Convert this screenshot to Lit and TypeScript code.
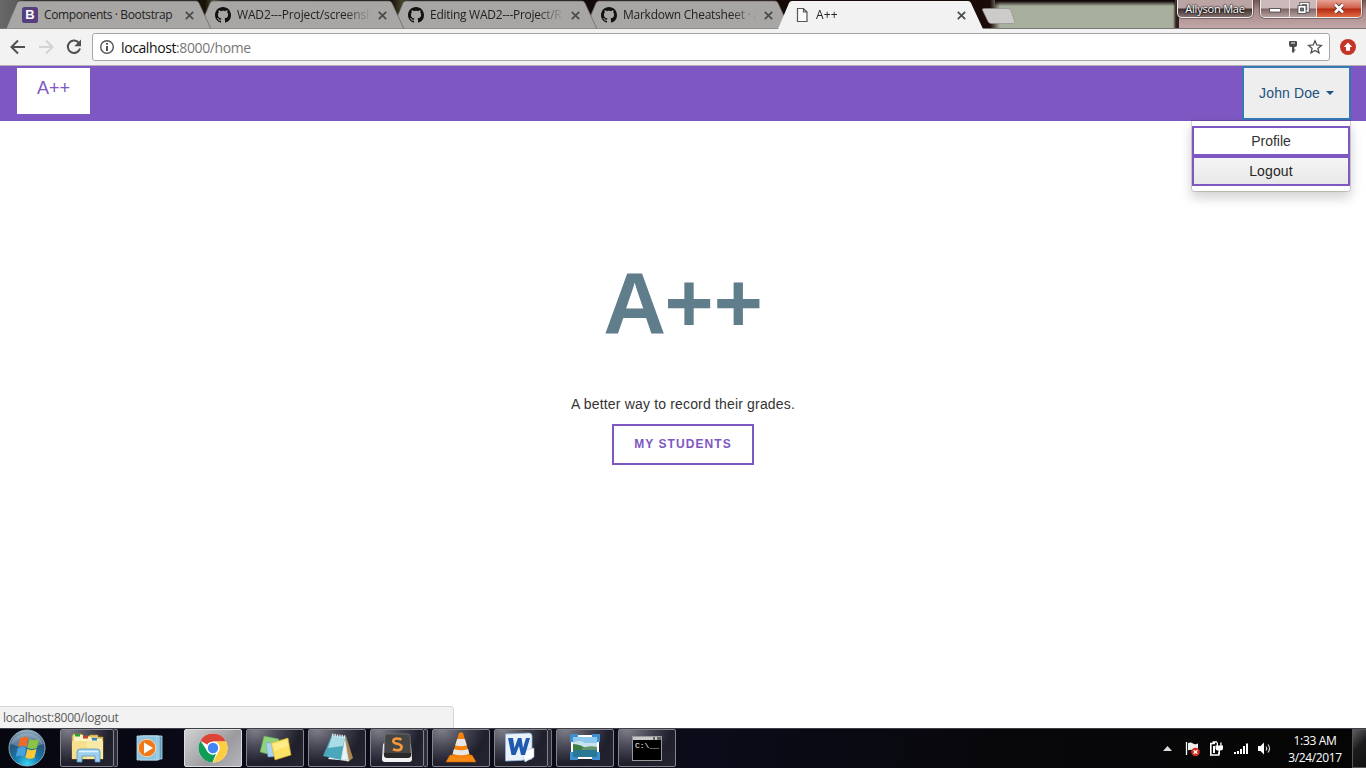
import { LitElement, html, css, svg } from "lit";
import { customElement } from "lit/decorators.js";

const octocat = html`<svg class="fav" width="16" height="16" viewBox="0 0 16 16"><path fill="#111" d="M8 0C3.58 0 0 3.58 0 8c0 3.54 2.29 6.53 5.47 7.59.4.07.55-.17.55-.38 0-.19-.01-.82-.01-1.49-2.01.37-2.53-.49-2.69-.94-.09-.23-.48-.94-.82-1.13-.28-.15-.68-.52-.01-.53.63-.01 1.08.58 1.23.82.72 1.21 1.87.87 2.33.66.07-.52.28-.87.51-1.07-1.78-.2-3.64-.89-3.64-3.95 0-.87.31-1.59.82-2.15-.08-.2-.36-1.02.08-2.12 0 0 .67-.21 2.2.82.64-.18 1.32-.27 2-.27s1.36.09 2 .27c1.53-1.04 2.2-.82 2.2-.82.44 1.1.16 1.92.08 2.12.51.56.82 1.27.82 2.15 0 3.07-1.87 3.75-3.65 3.95.29.25.54.73.54 1.48 0 1.07-.01 1.93-.01 2.2 0 .21.15.46.55.38A8.01 8.01 0 0 0 16 8c0-4.42-3.58-8-8-8z"/></svg>`;
const bootstrap = html`<div class="bs">B</div>`;
const pageIcon = html`<svg class="fav" width="16" height="16" viewBox="0 0 16 16"><path fill="#fafafa" stroke="#555" stroke-width="1.2" d="M3.5 1.5h6l3.5 3.5v9.5h-9.5z M9.5 1.5v3.5h3.5"/></svg>`;
const closeIcon = html`<svg class="x" width="9" height="9" viewBox="0 0 9 9"><path stroke="#4a4a4a" stroke-width="1.7" d="M.8.8l7.4 7.4M8.2.8L.8 8.2"/></svg>`;

const tabs = [
  { icon: bootstrap, title: "Components · Bootstrap", cls: "t1" },
  { icon: octocat, title: "WAD2---Project/screensh", cls: "t2" },
  { icon: octocat, title: "Editing WAD2---Project/R", cls: "t3" },
  { icon: octocat, title: "Markdown Cheatsheet · a", cls: "t4" },
  { icon: pageIcon, title: "A++", cls: "active" },
];

const explorer = svg`
  <path d="M2 5l1-2h9l1 2h6l1-1h8v2h5v22H2z" fill="#e9c767" stroke="#a98532" stroke-width=".6"/>
  <path d="M4 4h9v2h8v2h11v18H3z" fill="#fdf3c0"/><path d="M2 10h31v18H2z" fill="#f6e08e"/><path d="M17 10h16v18H17z" fill="#f9e9a6"/>
  <rect x="5" y="3" width="5" height="2.500" fill="#23a03a"/><rect x="13" y="5" width="5" height="2.500" fill="#c33e2f"/><rect x="22" y="7" width="5" height="2.500" fill="#2a86c8"/>
  <path d="M7 31V21q0-3 3-3h17q3 0 3 3v10h-5v-6H12v6z" fill="#9ed0ee" stroke="#5794bd" stroke-width=".8"/><path d="M9 20.500h19" stroke="#dff3ff" stroke-width="1.5"/>`;
const player = svg`
  <path d="M9 5h19v23H9z" fill="#5d9fc0" stroke="#b7ddef" stroke-width=".8"/><path d="M6 5h19v24H6z" fill="#7bbbd9" stroke="#c8e9f7" stroke-width=".8"/>
  <path d="M3 5h20v24H3z" fill="#8ec6e2" stroke="#b9dff0" stroke-width=".8"/>
  <circle cx="13" cy="17" r="8.800" fill="#ee7a1d" stroke="#fbd3ab"/><path d="M10 11.500l9 5.500-9 5.500z" fill="#fff"/>`;
const chromeIcon = svg`
  <circle cx="17" cy="17" r="14.5" fill="#fff"/>
  <path d="M17 17L4.440 9.750A14.500 14.500 0 0 1 29.560 9.750L30 10.500H17z" fill="#db4437"/>
  <path d="M17 10.500H30A14.500 14.500 0 0 1 17 31.500L22.600 20.300A6.500 6.500 0 0 0 17 10.500z" fill="#ffcd40"/>
  <path d="M4.440 9.750L11.400 20.300A6.500 6.500 0 0 0 20 22.800L16.500 31.500A14.500 14.500 0 0 1 4.440 9.750z" fill="#0f9d58"/>
  <circle cx="17" cy="17" r="6.600" fill="#fff"/><circle cx="17" cy="17" r="5.200" fill="#4285f4"/>`;
const notes = svg`
  <path d="M6 5l15 3-4 17-15-4z" fill="#8fd37f" stroke="#5a9c50" stroke-width=".5"/><path d="M8 12l14-1 2 14-14 1z" fill="#a6d4f5" stroke="#6a9fc8" stroke-width=".5"/>
  <path d="M13 12l17-5 3 17-16 5z" fill="#fbe164" stroke="#d3a92c" stroke-width=".6"/><path d="M15 13l14-4 1 6-14 5z" fill="#fff3a0" opacity=".6"/>`;
const notepad = svg`
  <path d="M26 5l7 22-5 4-6-2z" fill="#a98455"/><path d="M24 5l5 25-21-2z" fill="#f0f7f8"/>
  <path d="M12 4l14 2-5 23-18-4z" fill="#4aa7bc"/><path d="M12 5l13 1-2 9-15 2z" fill="#a9dce5"/><path d="M25 6l3 23-7 0z" fill="#e8f3f5" stroke="#9bb" stroke-width=".4"/>
  <path d="M12 4l14 2" stroke="#dfeaec" stroke-width="3" stroke-dasharray="1.4 1"/>`;
const sublime = svg`
  <path d="M3 14q0-2 2-2h24q2 0 2 2l1 14q0 3-3 3H5q-3 0-3-3z" fill="#f3f3f3"/>
  <path d="M7 3h21q2 0 2 2l1 18q0 3-3 3H7q-3 0-3-3L5 5q0-2 2-2z" fill="#454545" stroke="#777" stroke-width=".7"/><path d="M4 22h27v2q0 3-3 3H7q-3 0-3-3z" fill="#292929"/>
  <path d="M21.500 8.500q-8-2.500-8.200 1.700c0 3.600 8.300 1.600 8.300 5.800 0 3.800-5 3.800-8.600 2.200" stroke="#f7983a" stroke-width="2.600" fill="none"/>`;
const vlc = svg`
  <path d="M6 24h22l4 7H2z" fill="#f58a14" stroke="#c75f06" stroke-width=".6"/>
  <path d="M15 2q2-1.500 4 0l7 23q-9 4-18 0z" fill="#f6820c"/><path d="M13.200 8h7.600l2 6.300q-5.800 2-11.600 0z" fill="#e7e7e7"/><path d="M10 18q7 2.500 14 0l1.400 4.800q-8.400 3-16.800 0z" fill="#e7e7e7"/>`;
const word = svg`
  <path d="M1.500 3L25 2q3 0 3 3v23q-12 2-26.500 2z" fill="#e9f1fa" stroke="#8fb2dc" stroke-width=".8"/><path d="M18 20l12-3v9l-9 5z" fill="#fff" stroke="#a9bdd6" stroke-width=".6"/>
  <path d="M4 7h5l1.500 10L14 7h3.500l1.500 10L22 7h4l-5 17h-4l-2-9-3.500 9h-4z" fill="#1e5aae"/>`;
const viewer = svg`
  <rect x="3" y="4" width="28" height="24" fill="#fff"/><rect x="5" y="6" width="24" height="20" fill="#8cc8ec"/>
  <path d="M5 12q6-4 12 0h12v7H5z" fill="#c7e4ee"/><path d="M5 13q8 0 15 6H5z" fill="#3e7f44"/><path d="M14 17q8-3 15-1v3H14z" fill="#62936a"/><path d="M5 19h24v7H5z" fill="#2b7896"/>
  <path d="M2 3h8v3H5v5H2zM32 3h-8v3h5v5h3zM2 29h8v-3H5v-5H2zM32 29h-8v-3h5v-5h3z" fill="#3f8ed0"/>`;
const prompt = html`<div class="cmd"><div class="cmdbar"></div><div class="cmdtext">C:\\__</div></div>`;

const pic = (body: unknown) => html`<svg width="34" height="34" viewBox="0 0 34 34">${body}</svg>`;
const tasks = [
  { cls: "stacked", body: pic(explorer) },
  { cls: "idle", body: pic(player) },
  { cls: "lit", body: pic(chromeIcon) },
  { cls: "", body: pic(notes) },
  { cls: "", body: pic(notepad) },
  { cls: "stacked", body: pic(sublime) },
  { cls: "", body: pic(vlc) },
  { cls: "stacked", body: pic(word) },
  { cls: "", body: pic(viewer) },
  { cls: "", body: prompt },
];

@customElement("browser-tabs")
class BrowserTabs extends LitElement {
  static styles = css`
    :host { display: flex; height: 29px; box-sizing: border-box; padding-left: 6px; font: 12px "Open Sans", sans-serif; color: #222; position: relative;
      background: linear-gradient(#120706 0, #120706 1px, #12070600 6px) 995px 0/180px 29px no-repeat,
        linear-gradient(#6d5552, #a68988 10px, #c3a8aa) 1179px 0/187px 29px no-repeat,
        linear-gradient(90deg, #686868 0, #5d5d5d 17px, #201818 25px, #17110d 180px, #191109 205px, #55543a 214px, #100808 225px, #110a06 390px, #45432a 402px, #120a09 415px, #1a0b08 990px, #a8b09d 1000px, #a8b09d 1173px, #30211e 1176px, #30211e 1180px, #b49899 1184px, #c9b3b5 1366px); }
    .tab { position: relative; width: 205px; height: 29px; margin-right: -12px; display: flex; align-items: center; box-sizing: border-box; padding: 1px 17px 0 16px; }
    .t1 { z-index: 4; } .t2 { z-index: 3; } .t3 { z-index: 2; } .t4 { z-index: 1; } .active { z-index: 5; }
    .shape { position: absolute; inset: 0; z-index: -1; }
    .fav { flex: none; }
    .bs { flex: none; width: 16px; height: 16px; border-radius: 2.500px; background: #563d7c; color: #fff; font: bold 13px/16px "Liberation Sans", sans-serif; text-align: center; }
    .title { flex: 1; min-width: 0; margin-left: 6px; margin-right: 3px; white-space: nowrap; line-height: 20px; letter-spacing: -.25px; -webkit-mask-image: linear-gradient(90deg, #000 108px, transparent 134px); }
    .t1 .title { -webkit-mask-image: none; letter-spacing: -.38px; }
    .t2 .title { letter-spacing: -.15px; } .t3 .title { letter-spacing: -.28px; } .active .title { letter-spacing: .2px; }
    .x { flex: none; }
    .plus { margin: 8px 0 0 10px; }
    .gap { flex: 1; }
    .glass { height: 18px; box-sizing: border-box; border: 1px solid #eee; border-top: 0; border-radius: 0 0 5px 5px; box-shadow: 0 0 0 1px #3337; display: flex; overflow: hidden; }
    .user { width: 76px; margin-right: 7px; background: linear-gradient(#bba5a4 0 8px, #423232 9px, #84706f); justify-content: center; color: #fff; font-size: 11px; line-height: 18px; letter-spacing: -.2px; text-shadow: 0 0 2px #000, 0 0 2px #000; white-space: nowrap; }
    .win { width: 102px; margin-right: 4px; }
    .win > div { display: flex; align-items: center; justify-content: center; background: linear-gradient(#cbb8b9 0 8px, #7d6566 9px, #b7a0a1); border-right: 1px solid #ddd; }
    .min { width: 28px; } .max { width: 26px; }
    .win .cl { flex: 1; border: 0; background: linear-gradient(#e7a294 0, #d0604b 8px, #b52a12 9px, #e06b42); }
    .line { position: absolute; left: 0; right: 0; bottom: 0; height: 1px; background: #7b7574; }
  `;
  render() {
    return html`
      ${tabs.map((t) => html`<div class="tab ${t.cls}">
        <svg class="shape" width="205" height="29" viewBox="0 0 205 29"><path d="M0 29L11 3Q12 1 14 1H190Q192 1 193 3L205 29z" fill=${t.cls === "active" ? "#f2f2f2" : "#a8a6a5"} stroke=${t.cls === "active" ? "none" : "#66625f"} stroke-width=".7"/></svg>
        ${t.icon}<div class="title">${t.title}</div>${closeIcon}</div>`)}
      <svg class="plus" width="34" height="16" viewBox="0 0 34 16"><path d="M3 .5h24q2 0 2.800 1.500l4 12q.5 1.500-1 1.500H10q-2 0-3-2L1.500 2Q1 .5 3 .5z" fill="#cccbc9" stroke="#8b8a86" stroke-width=".6"/></svg>
      <div class="gap"></div>
      <div class="glass user">Allyson Mae</div>
      <div class="glass win">
        <div class="min"><svg width="14" height="17"><rect x="1.500" y="8.500" width="11" height="3.500" fill="#fff" stroke="#444" stroke-width=".8"/></svg></div>
        <div class="max"><svg width="14" height="17" fill="none"><path d="M5 3.500h7v7.500H5z" stroke="#444" stroke-width="3"/><path d="M5 3.500h7v7.500H5z" stroke="#fff" stroke-width="1.600"/><path d="M2 5.500h8v8H2z" fill="#fff" stroke="#444" stroke-width=".8"/><path d="M4.500 8h3v3h-3z" fill="#777" stroke="#444" stroke-width=".8"/></svg></div>
        <div class="cl"><svg width="14" height="17"><path d="M3 4.500l8 8M11 4.500l-8 8" stroke="#5a3030" stroke-width="4.200"/><path d="M3 4.500l8 8M11 4.500l-8 8" stroke="#fff" stroke-width="2.600"/></svg></div>
      </div>
      <div class="line"></div>`;
  }
}

@customElement("address-bar")
class AddressBar extends LitElement {
  static styles = css`
    :host { display: flex; align-items: center; height: 37px; box-sizing: border-box; background: #f2f2f2; border-bottom: 1px solid #b3b0b6; padding: 0 10px 0 9px; }
    svg { flex: none; display: block; }
    .nav { display: flex; gap: 10px; margin-right: 9px; }
    .box { flex: 1; height: 28px; box-sizing: border-box; border: 1px solid #a6a6a6; border-radius: 3px; background: #fff; display: flex; align-items: center; padding: 0 6px 0 6px; margin-right: 10px; }
    .url { flex: 1; margin-left: 6px; font: 14px/20px "Open Sans", sans-serif; letter-spacing: -.4px; color: #777; padding-top: 1px; }
    .host { color: #111; }
    .star { margin-left: 8px; }
  `;
  render() {
    return html`
      <div class="nav">
        <svg width="18" height="18" viewBox="0 0 18 18"><path d="M16 9H3M9 2.500L2.500 9 9 15.500" fill="none" stroke="#505050" stroke-width="2"/></svg>
        <svg width="18" height="18" viewBox="0 0 18 18"><path d="M2 9h13M9 2.500L15.500 9 9 15.500" fill="none" stroke="#d3d3d3" stroke-width="2"/></svg>
        <svg width="18" height="18" viewBox="0 0 18 18"><path d="M14.200 5.200A6.200 6.200 0 1 0 15 10.500" fill="none" stroke="#505050" stroke-width="2"/><path d="M16 1.500v6.700H9.300z" fill="#505050"/></svg>
      </div>
      <div class="box">
        <svg width="16" height="16" viewBox="0 0 16 16"><circle cx="8" cy="8" r="6.300" fill="none" stroke="#555" stroke-width="1.400"/><path d="M7.100 4h1.800v1.800H7.100zM7.100 7h1.800v5H7.100z" fill="#444"/></svg>
        <div class="url"><span class="host">localhost</span>:8000/home</div>
        <svg width="12" height="16" viewBox="0 0 12 16"><path d="M3 2h6q1 0 1 1v3q0 2-2 2H7.300v5.500H5V8H4Q2 8 2 6V3q0-1 1-1z" fill="#4b4b4b"/><path d="M4 4h4" stroke="#fff"/><path d="M7 11h1.500" stroke="#4b4b4b"/></svg>
        <svg class="star" width="16" height="16" viewBox="0 0 16 16"><path d="M8 1.800l1.800 4.200 4.600.4-3.500 3 1.100 4.500L8 11.500l-4 2.400 1.100-4.500-3.500-3L6.200 6z" fill="none" stroke="#505050" stroke-width="1.300"/></svg>
      </div>
      <svg width="16" height="16" viewBox="0 0 16 16"><circle cx="8" cy="8" r="8" fill="#c53527"/><path d="M8 3.500l4.200 4.500H10v3.700H6V8H3.800z" fill="#fff"/></svg>`;
  }
}

@customElement("task-bar")
class TaskBar extends LitElement {
  static styles = css`
    :host { display: flex; height: 40px; box-sizing: border-box; border-top: 1px solid #3e3e46; background: linear-gradient(90deg, #06070f, #0a0a18 200px, #0b0b1a 700px, #08080b 1000px, #050505); color: #fff; padding-left: 8px; }
    .orb { width: 38px; height: 38px; margin-right: 14px; }
    .list { display: flex; gap: 4px; flex: 1; }
    .task { width: 58px; height: 38px; display: flex; box-sizing: border-box; }
    .face { flex: 1; box-sizing: border-box; border: 1px solid #83838c; border-radius: 2px; display: flex; align-items: center; justify-content: center; background: radial-gradient(ellipse at 15% 0, #7e7e8a 0, #454553 35%, #20202d 65%, #252532 100%); }
    .idle .face { border-color: transparent; background: none; }
    .lit .face { border-color: #ddd; background: linear-gradient(135deg, #d2d2d4, #9b9b9f 60%, #b6b6ba); }
    .edge { width: 4px; box-sizing: border-box; border: 1px solid #777780; border-left: 0; border-radius: 0 2px 2px 0; background: #2c2c38; }
    .cmd { width: 30px; height: 25px; box-sizing: border-box; border: 1px solid #999; background: #000; }
    .cmdbar { height: 3px; background: linear-gradient(90deg, #c8c8c8 0 20px, #666 20px 22px, #ccc 22px 24px, #666 24px); }
    .cmdtext { font: 8px/11px "Liberation Mono", monospace; padding-left: 2px; }
    .tray { display: flex; align-items: center; padding-right: 5px; }
    .tray svg { margin-right: 7px; }
    .tray .arrow { margin-right: 12px; }
    .tray .spk { margin-right: 0; }
    .clock { width: 74px; text-align: center; font: 12px/17px "Open Sans", sans-serif; letter-spacing: -.35px; white-space: nowrap; padding-top: 3px; }
    .desk { width: 14px; box-sizing: border-box; border: 1px solid #55555a; border-right: 0; background: linear-gradient(135deg, #5e5e60, #1c1c1e 45%, #111); }
  `;
  render() {
    return html`
      <svg class="orb" width="38" height="38" viewBox="0 0 38 38">
        <defs><radialGradient id="o" cx="50%" cy="95%" r="95%"><stop offset="0" stop-color="#3bd5f2"/><stop offset=".35" stop-color="#147baf"/><stop offset=".7" stop-color="#2a5478"/><stop offset="1" stop-color="#9fb6c6"/></radialGradient></defs>
        <circle cx="19" cy="19" r="18" fill="url(#o)" stroke="#89a9bc" stroke-width="1"/><path d="M3 15a16.500 14 0 0 1 32 0q-16 7-32 0z" fill="#fff" opacity=".25"/>
        <path d="M12 9.500q5-3 8.500-.5l-2 9q-4-2.500-8.500 0z" fill="#ee6a28"/><path d="M21.500 10q4.500 2.500 9.500 0l-2.200 9q-4.800 2-9.300-.3z" fill="#8bc53f"/><path d="M9.700 19.300q4.500-2.500 8.500 0l-2 8.700q-4-2.500-8.500 0z" fill="#4aa0dc"/><path d="M19.300 20q4.500 2.300 9.300 0l-2.200 8.700q-4.700 2.300-9-.3z" fill="#fcc934"/>
      </svg>
      <div class="list">${tasks.map((t) => html`<div class="task ${t.cls}"><div class="face">${t.body}</div>${t.cls === "stacked" ? html`<div class="edge"></div>` : ""}</div>`)}</div>
      <div class="tray">
        <svg class="arrow" width="9" height="5"><path d="M4.500 0L9 5H0z" fill="#ddd"/></svg>
        <svg width="17" height="17" viewBox="0 0 17 17"><path d="M2.500 2v13" stroke="#fff" stroke-width="1.300"/><path d="M4 3q3-1 5 .5t5 0v7q-3 1-5-.2t-5 0z" fill="#eee"/><circle cx="11.500" cy="12" r="4.300" fill="#d32c1f"/><path d="M9.700 10.200l3.600 3.600M13.300 10.200l-3.600 3.600" stroke="#fff" stroke-width="1.300"/></svg>
        <svg width="17" height="17" viewBox="0 0 17 17"><path d="M7 3.500H2.800V15h8v-2.500M4.500 2H9" fill="none" stroke="#fff" stroke-width="1.600"/><path d="M5 6h2v7H5z" fill="#fff"/><path d="M7.500 5.500H15V8q0 2.500-2.500 2.500H10Q7.500 10.500 7.500 8zM8.700 2.500H10v3H8.700zM12.300 2.500h1.300v3h-1.300z" fill="#fff"/><path d="M11.200 10v4" stroke="#fff" stroke-width="1.500"/></svg>
        <svg width="17" height="17" viewBox="0 0 17 17"><path d="M2 12h2v2H2zM5 11h2v3H5zM8 9h2v5H8zM11 6h2v8h-2zM14 3.500h2V14h-2z" fill="#fff"/></svg>
        <svg class="spk" width="17" height="17" viewBox="0 0 17 17"><path d="M2 6h2.500L8 2.500v12L4.500 11H2z" fill="#fff"/><path d="M10 6.500q1.500 2 0 4M12 4.500q3 4 0 8" fill="none" stroke="#ddd" stroke-width="1.100"/></svg>
      </div>
      <div class="clock"><div>1:33 AM</div><div>3/24/2017</div></div>
      <div class="desk"></div>`;
  }
}

@customElement("app-root")
class AppRoot extends LitElement {
  static styles = css`
    :host { display: flex; flex-direction: column; width: 1366px; height: 768px; overflow: hidden; background: #fff; font: 14px/20px "Liberation Sans", Arial, sans-serif; color: #333; }
    .navbar { flex: none; height: 55px; background: #7e57c2; display: flex; justify-content: space-between; box-sizing: border-box; padding: 0 15px 0 17px; }
    .brand { width: 73px; height: 46px; margin-top: 2px; background: #fff; color: #7e57c2; font-size: 18px; line-height: 40px; text-align: center; }
    .account { position: relative; height: 54px; }
    .toggle { height: 54px; box-sizing: border-box; border: 2px solid #337ab7; background: #eee; color: #23527c; padding: 15px; display: flex; align-items: center; letter-spacing: .12px; }
    .caret { margin-left: 6px; border: 4px solid transparent; border-top-color: #23527c; border-bottom: 0; }
    .menu { position: absolute; right: 0; top: 54px; width: 160px; box-sizing: border-box; padding: 5px 0; background: #fff; background-clip: padding-box; border: 1px solid rgba(0,0,0,.15); border-radius: 0 0 4px 4px; box-shadow: 0 6px 12px rgba(0,0,0,.175); }
    .item { height: 30px; box-sizing: border-box; border: 2px solid #7e57c2; line-height: 26px; text-align: center; }
    .hover { background: linear-gradient(#f5f5f5, #e8e8e8); color: #262626; letter-spacing: .15px; }
    .page { flex: 1; display: flex; flex-direction: column; align-items: center; min-height: 0; }
    .hero { height: 92px; margin-top: 136px; font-weight: bold; font-size: 84px; line-height: 92px; color: #607d8b; }
    .cap { font-size: 87px; line-height: 0; vertical-align: -1px; letter-spacing: -1.500px; }
    .lead { margin-top: 45px; letter-spacing: .17px; }
    .cta { margin-top: 10px; height: 41px; box-sizing: border-box; border: 2px solid #7e57c2; padding: 0 20px; font-weight: bold; font-size: 12px; line-height: 36px; letter-spacing: 1.080px; color: #7e57c2; }
    .status { margin-top: auto; align-self: flex-start; width: 454px; height: 22px; box-sizing: border-box; background: #f2f2f2; border: 1px solid #d5d5d5; border-left: 0; border-bottom: 0; border-radius: 0 4px 0 0; padding-left: 3px; font: 12px/21px "Open Sans", sans-serif; letter-spacing: -.25px; color: #5a5a5a; }
  `;
  render() {
    return html`
      <browser-tabs></browser-tabs>
      <address-bar></address-bar>
      <div class="navbar">
        <div class="brand">A++</div>
        <div class="account">
          <div class="toggle">John Doe<span class="caret"></span></div>
          <div class="menu"><div class="item">Profile</div><div class="item hover">Logout</div></div>
        </div>
      </div>
      <div class="page">
        <div class="hero"><span class="cap">A</span>++</div>
        <div class="lead">A better way to record their grades.</div>
        <div class="cta">MY STUDENTS</div>
        <div class="status">localhost:8000/logout</div>
      </div>
      <task-bar></task-bar>`;
  }
}
